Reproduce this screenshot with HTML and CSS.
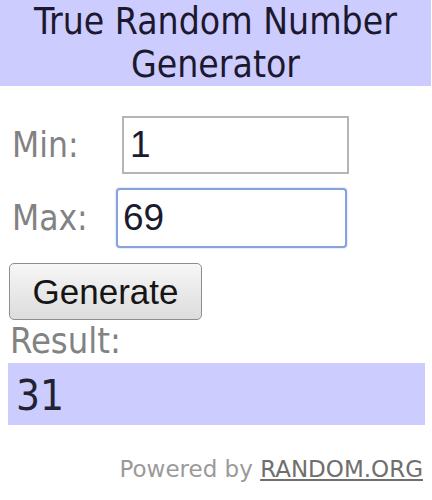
FILE: index.html
```html
<!DOCTYPE html>
<html>
<head>
<meta charset="utf-8">
<link rel="stylesheet" href="styles.css">
</head>
<body>
<div class="widget">
  <div class="title">True Random Number<br>Generator</div>
  <div class="form">
    <div class="row row-min"><span class="label">Min:</span><input class="field" type="text" value="1"></div>
    <div class="row row-max"><span class="label">Max:</span><input class="field field-focus" type="text" value="69"></div>
    <button class="btn" type="button">Generate</button>
    <div class="result-label">Result:</div>
    <div class="result">31</div>
    <div class="powered">Powered by <a class="powered-link" href="#">RANDOM.ORG</a></div>
  </div>
</div>
</body>
</html>
```
FILE: styles.css
```css
html, body {
  margin: 0;
  padding: 0;
  background: #ffffff;
}
.widget {
  width: 432px;
  font-family: "DejaVu Sans", Verdana, sans-serif;
  font-stretch: condensed;
}
.title {
  width: 431px;
  background: #ccccff;
  text-align: center;
  font-size: 37px;
  line-height: 43px;
  color: #1c182e;
}
.form {
  display: flex;
  flex-direction: column;
  align-items: flex-start;
  padding-top: 30px;
}
.row {
  display: flex;
  align-items: center;
  padding-left: 12px;
}
.label {
  font-size: 35px;
  color: #828282;
}
.row-min .label { width: 110px; }
.row-max { margin-top: 14px; }
.row-max .label { width: 104px; }
.field {
  box-sizing: border-box;
  margin: 0;
  width: 227px;
  height: 58px;
  padding: 0 0 0 6px;
  border: 2px solid #b5b5b5;
  border-radius: 0;
  outline: none;
  background: #ffffff;
  font-family: "Liberation Sans", Arial, sans-serif;
  font-size: 37px;
  color: #1b1b30;
}
.field-focus {
  width: 231px;
  height: 60px;
  padding-left: 5px;
  border-color: #86a3dc;
  border-radius: 4px;
  box-shadow: 0 0 2px #a9bfea;
}
.btn {
  margin: 15px 0 0 9px;
  width: 193px;
  height: 57px;
  padding: 0;
  border: 1px solid #8e8e8e;
  border-radius: 5px;
  background: linear-gradient(#f7f7f7, #dcdcdc);
  font-family: "Liberation Sans", Arial, sans-serif;
  font-size: 35px;
  color: #151515;
}
.result-label {
  margin: -2px 0 0 10px;
  font-size: 36px;
  line-height: 45px;
  color: #828282;
}
.result {
  box-sizing: border-box;
  margin-left: 8px;
  width: 417px;
  height: 62px;
  padding: 3px 0 0 8px;
  background: #ccccff;
  font-size: 42px;
  line-height: 59px;
  color: #222235;
}
.powered {
  align-self: flex-end;
  margin: 31px 9px 0 0;
  font-size: 23px;
  font-stretch: normal;
  color: #9a9a9a;
}
.powered-link {
  color: #6f6f6f;
  text-decoration: underline;
}
```
